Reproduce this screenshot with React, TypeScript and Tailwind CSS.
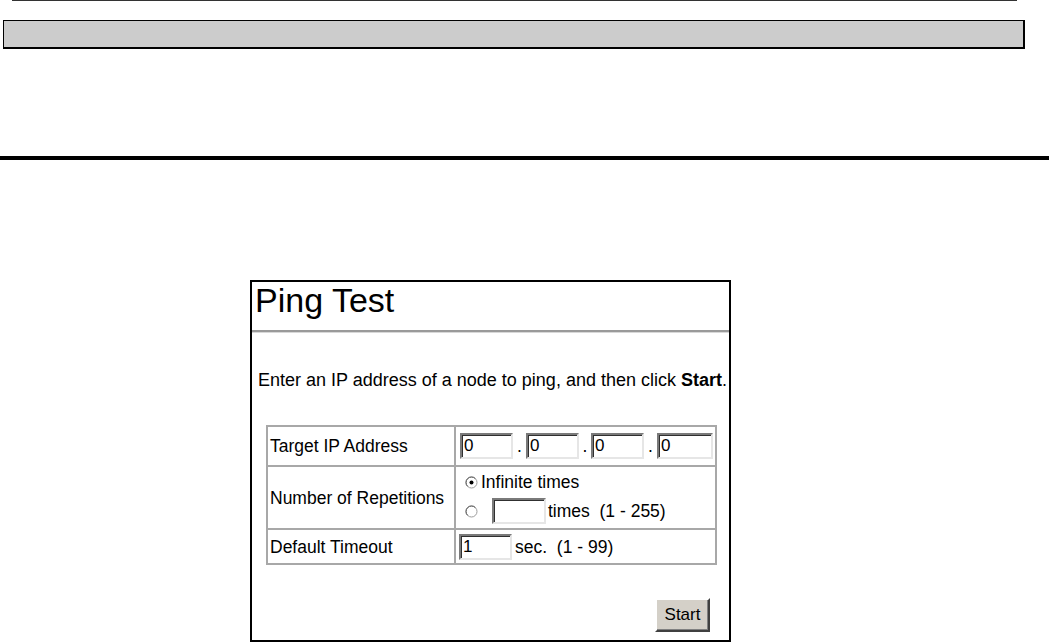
const font = { fontFamily: '"Liberation Sans", Arial, sans-serif' };

function SunkenInput({ value, width }: { value: string; width: string }) {
  return (
    <div
      className={`${width} h-[26px] bg-white border-2 border-t-[#7a7a7a] border-l-[#7a7a7a] border-r-[#e6e6e6] border-b-[#e6e6e6] shadow-[inset_1px_1px_0_#303030] flex items-center pl-[2px] text-[17px] leading-[20px] text-black`}
    >
      {value}
    </div>
  );
}

function Radio({ checked }: { checked?: boolean }) {
  return (
    <svg width="13" height="13" viewBox="0 0 13 13" className="shrink-0">
      <circle cx="6.5" cy="6.5" r="5.5" fill="#fff" stroke="#9c9c9c" strokeWidth="1" />
      <path d="M2.6 10.4 A5.5 5.5 0 0 1 10.4 2.6" fill="none" stroke="#5a5a5a" strokeWidth="1" />
      {checked && <circle cx="6.5" cy="6.5" r="2" fill="#000" />}
    </svg>
  );
}

export default function App() {
  return (
    <div className="w-[1049px] h-[642px] bg-white overflow-hidden text-black" style={font}>
      <div className="ml-[12px] w-[1005px] h-px bg-[#333]" />
      <div className="mt-[19px] ml-[3px] w-[1022px] h-[29px] bg-[#cccccc] border border-black border-r-2 border-b-2" />
      <div className="mt-[107px] h-[4px] w-full bg-black" />

      <div className="mt-[120px] ml-[250px] w-[481px] h-[362px] border-2 border-black flex flex-col">
        <div className="mt-[2px] pl-[3px] text-[34px] leading-[33px]">Ping Test</div>
        <div className="mt-[13px] h-[2px] bg-[#9a9a9a]" />
        <div className="h-px bg-[#d8d8d8]" />

        <p className="mt-[37px] pl-[6px] text-[18px] leading-[20px] whitespace-nowrap">
          Enter an IP address of a node to ping, and then click <b>Start</b>.
        </p>

        <div className="mt-[35px] ml-[14px] w-[451px] border-2 border-[#a8a8a8] text-[17.5px] leading-[20px]">
          <div className="flex h-[40px] border-b-2 border-[#a8a8a8]">
            <div className="w-[188px] border-r-2 border-[#a8a8a8] flex items-center pl-[2px]">
              Target IP Address
            </div>
            <div className="flex-1 flex items-center pl-[4px]">
              <SunkenInput value="0" width="w-[53px]" />
              <span className="w-[13px] text-center">.</span>
              <SunkenInput value="0" width="w-[53px]" />
              <span className="w-[12px] text-center">.</span>
              <SunkenInput value="0" width="w-[53px]" />
              <span className="w-[13px] text-center">.</span>
              <SunkenInput value="0" width="w-[56px]" />
            </div>
          </div>

          <div className="flex h-[63px] border-b-2 border-[#a8a8a8]">
            <div className="w-[188px] border-r-2 border-[#a8a8a8] flex items-center pl-[2px]">
              Number of Repetitions
            </div>
            <div className="flex-1 flex flex-col pl-[9px] pt-[5px]">
              <div className="flex items-center h-[20px] gap-[3px]">
                <Radio checked />
                <span>Infinite times</span>
              </div>
              <div className="flex items-center mt-[6px] h-[26px]">
                <Radio />
                <div className="ml-[14px]">
                  <SunkenInput value="" width="w-[54px]" />
                </div>
                <span className="ml-[2px] whitespace-pre">times  (1 - 255)</span>
              </div>
            </div>
          </div>

          <div className="flex h-[33px]">
            <div className="w-[188px] border-r-2 border-[#a8a8a8] flex items-center pl-[2px]">
              Default Timeout
            </div>
            <div className="flex-1 flex items-center pl-[3px]">
              <SunkenInput value="1" width="w-[53px]" />
              <span className="ml-[3px] whitespace-pre">sec.  (1 - 99)</span>
            </div>
          </div>
        </div>

        <div className="mt-[33px] flex justify-end pr-[19px]">
          <button className="w-[55px] h-[34px] bg-[#d4d0c8] border-2 border-t-white border-l-white border-r-[#404040] border-b-[#404040] shadow-[inset_-1px_-1px_0_#808080] text-[17px] leading-[20px] text-black">
            Start
          </button>
        </div>
      </div>
    </div>
  );
}
